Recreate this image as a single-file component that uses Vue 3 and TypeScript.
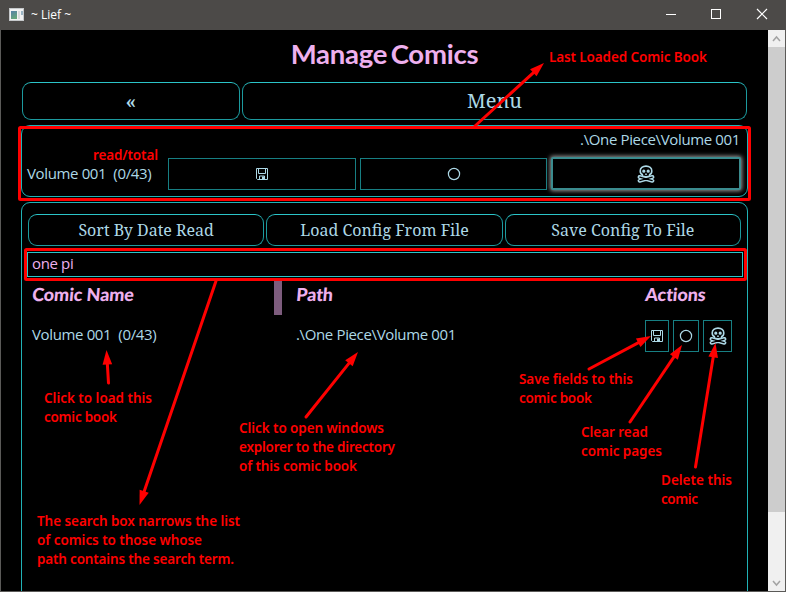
<script setup lang="ts">
import { ref } from 'vue'

interface Arrow { x1: number; y1: number; x2: number; y2: number }
interface Note { x: number; y: number; w: number; text: string }

const search = ref('one pi')

const arrows: Arrow[] = [
  { x1: 475, y1: 126, x2: 544, y2: 63 },
  { x1: 108.5, y1: 383, x2: 106.5, y2: 350 },
  { x1: 306, y1: 417, x2: 358, y2: 352 },
  { x1: 216, y1: 281, x2: 139.5, y2: 505 },
  { x1: 589, y1: 369, x2: 651, y2: 336 },
  { x1: 630, y1: 422, x2: 682, y2: 345 },
  { x1: 695.5, y1: 467, x2: 715.5, y2: 343 },
]

const notes: Note[] = [
  { x: 549, y: 62, w: 158, text: 'Last Loaded Comic Book' },
  { x: 93, y: 160, w: 65, text: 'read/total' },
  { x: 44, y: 403, w: 108, text: 'Click to load this' },
  { x: 44, y: 422, w: 73, text: 'comic book' },
  { x: 239, y: 433, w: 145, text: 'Click to open windows' },
  { x: 239, y: 452, w: 156, text: 'explorer to the directory' },
  { x: 239, y: 471, w: 118, text: 'of this comic book' },
  { x: 519, y: 384, w: 114, text: 'Save fields to this' },
  { x: 519, y: 403, w: 73, text: 'comic book' },
  { x: 581, y: 437, w: 67, text: 'Clear read' },
  { x: 581, y: 456, w: 81, text: 'comic pages' },
  { x: 661, y: 485, w: 71, text: 'Delete this' },
  { x: 661, y: 504, w: 37, text: 'comic' },
  { x: 37, y: 526, w: 203, text: 'The search box narrows the list' },
  { x: 37, y: 545, w: 165, text: 'of comics to those whose' },
  { x: 37, y: 564, w: 197, text: 'path contains the search term.' },
]

function head(a: Arrow): string {
  const d = Math.hypot(a.x2 - a.x1, a.y2 - a.y1)
  const ux = (a.x2 - a.x1) / d
  const uy = (a.y2 - a.y1) / d
  const bx = a.x2 - ux * 14.5
  const by = a.y2 - uy * 14.5
  return `${a.x2},${a.y2} ${bx - uy * 4.8},${by + ux * 4.8} ${bx + uy * 4.8},${by - ux * 4.8}`
}

function shaft(a: Arrow) {
  const d = Math.hypot(a.x2 - a.x1, a.y2 - a.y1)
  const k = (d - 12) / d
  return { x1: a.x1, y1: a.y1, x2: a.x1 + (a.x2 - a.x1) * k, y2: a.y1 + (a.y2 - a.y1) * k }
}
</script>

<template>
  <div class="window">
    <svg width="0" height="0" class="defs">
      <symbol id="disk" viewBox="0 0 12 12">
        <path d="M.5.5h11v11h-10l-1-1zM2.5.5v5h7v-5M3.500 11.500v-3.500h5v3.500" fill="none" stroke="currentColor" />
        <path d="M6 8.500h2.500v3H6z" fill="currentColor" />
      </symbol>
      <symbol id="circle" viewBox="0 0 14 14">
        <circle cx="7" cy="7" r="5.600" fill="none" stroke="currentColor" stroke-width="1.200" />
      </symbol>
      <symbol id="skull" viewBox="0 0 18 18">
        <path d="M5.300 10.800V9.600C3.700 9 3.200 7.500 3.200 6c0-3 2.500-4.900 5.800-4.900S14.800 3 14.800 6c0 1.500-.5 3-2.100 3.600v1.200c-1.200 1.300-6.200 1.300-7.400 0z" fill="none" stroke="currentColor" stroke-width="1.600" />
        <path d="M5.200 6.200a1.600 1.600 0 1 0 3.200 0a1.600 1.600 0 1 0-3.200 0M9.600 6.200a1.600 1.600 0 1 0 3.200 0a1.600 1.600 0 1 0-3.200 0M8.200 8.500h1.600v1.500H8.200z" fill="currentColor" />
        <path d="M2.600 12l12.800 3.800M15.400 12L2.600 15.800" fill="none" stroke="currentColor" stroke-width="4" stroke-linecap="round" />
        <path d="M2.800 12.100l12.400 3.600M15.200 12.100L2.800 15.700" fill="none" stroke="#000" stroke-width="1.200" stroke-linecap="round" />
      </symbol>
    </svg>

    <header class="titlebar">
      <svg class="app-icon" width="16" height="14" viewBox="0 0 16 14">
        <defs>
          <linearGradient id="pane" x1="0" y1="0" x2=".4" y2="1">
            <stop offset="0" stop-color="#5580a8" />
            <stop offset="1" stop-color="#65a57b" />
          </linearGradient>
        </defs>
        <rect x=".5" y=".5" width="14" height="12" fill="#f1f2f2" stroke="#c5c8ca" />
        <rect x="2" y="3" width="6" height="8" fill="url(#pane)" />
        <rect x="9" y="3" width="2" height="8" fill="#d8dadc" />
        <rect x="12" y="3" width="2" height="4" fill="#9bb5c4" />
      </svg>
      <span class="app-name">~ Lief ~</span>
      <div class="controls">
        <svg width="46" height="30"><path d="M18 14.500h10" stroke="#fff" /></svg>
        <svg width="46" height="30"><rect x="17.500" y="9.500" width="9" height="9" stroke="#fff" fill="none" /></svg>
        <svg width="46" height="30"><path d="M17 9l10 10M27 9l-10 10" stroke="#fff" stroke-width="1.200" /></svg>
      </div>
    </header>

    <div class="body">
      <main class="page">
        <h1>Manage Comics</h1>
        <nav class="nav">
          <button class="pill back">«</button>
          <button class="pill menu">Menu</button>
        </nav>

        <section class="panel current">
          <div class="current-path">.\One Piece\Volume 001</div>
          <div class="current-row">
            <span class="current-name">Volume 001&nbsp; (0/43)</span>
            <button class="box"><svg width="12" height="12"><use href="#disk" /></svg></button>
            <button class="box"><svg width="14" height="14"><use href="#circle" /></svg></button>
            <button class="box focused"><svg width="18" height="18"><use href="#skull" /></svg></button>
          </div>
        </section>

        <section class="panel library">
          <div class="tools">
            <button class="pill tool">Sort By Date Read</button>
            <button class="pill tool">Load Config From File</button>
            <button class="pill tool">Save Config To File</button>
          </div>
          <input v-model="search" class="search" type="text" spellcheck="false" />
          <div class="grid head">
            <div class="h">Comic Name</div>
            <div class="grip"></div>
            <div class="h">Path</div>
            <div class="h">Actions</div>
          </div>
          <div class="grid row">
            <div class="cell">Volume 001&nbsp; (0/43)</div>
            <div></div>
            <div class="cell">.\One Piece\Volume 001</div>
            <div class="actions">
              <button class="box save"><svg width="12" height="12"><use href="#disk" /></svg></button>
              <button class="box clear"><svg width="14" height="14"><use href="#circle" /></svg></button>
              <button class="box remove"><svg width="18" height="18"><use href="#skull" /></svg></button>
            </div>
          </div>
        </section>
      </main>

      <aside class="scrollbar">
        <svg width="17" height="17"><path d="M5 11l3.500-4 3.500 4" fill="none" stroke="#a3a3a3" stroke-width="1.500" /></svg>
        <div class="thumb"></div>
        <svg class="down" width="17" height="17"><path d="M5 7l3.500 4L12 7" fill="none" stroke="#a3a3a3" stroke-width="1.500" /></svg>
      </aside>
    </div>

    <svg class="overlay" width="786" height="592" viewBox="0 0 786 592">
      <rect x="19.500" y="127.500" width="730" height="72" rx="1" class="frame" />
      <rect x="25.500" y="249.500" width="720" height="30" rx="1" class="frame" />
      <g v-for="(a, i) in arrows" :key="i">
        <line v-bind="shaft(a)" class="shaft" />
        <polygon :points="head(a)" fill="#f00" />
      </g>
      <text v-for="n in notes" :key="n.text + n.x" :x="n.x" :y="n.y" :textLength="n.w" class="note">{{ n.text }}</text>
    </svg>
  </div>
</template>

<style>
body {
  margin: 0;
  background: #000;
  overflow: hidden;
}
</style>

<style scoped>
* {
  box-sizing: border-box;
}
.window {
  position: relative;
  width: 786px;
  height: 592px;
  display: flex;
  flex-direction: column;
  background: #000;
  color: #add8e6;
  overflow: hidden;
  font: 15px/20px "Open Sans", "Noto Sans", sans-serif;
  letter-spacing: -0.36px;
}
.defs {
  position: absolute;
}
.titlebar {
  height: 30px;
  flex: none;
  display: flex;
  align-items: center;
  background: #4c4a48;
  color: #fff;
  padding-left: 9px;
}
.app-name {
  font-size: 12px;
  margin-left: 6px;
  letter-spacing: 0;
}
.controls {
  display: flex;
  margin-left: auto;
}
.body {
  flex: 1;
  min-height: 0;
  display: flex;
  border: 1px solid #5b5a58;
  border-top: 0;
}
.page {
  flex: 1;
  min-width: 0;
  padding: 0 20px;
  overflow: hidden;
}
h1 {
  margin: 0;
  height: 52px;
  line-height: 48px;
  text-align: center;
  font-family: Lato, sans-serif;
  font-weight: 700;
  font-size: 27.5px;
  letter-spacing: -0.25px;
  word-spacing: -3px;
  color: #eeb0ee;
}
button {
  font: inherit;
  color: inherit;
  background: #000;
  padding: 0;
  margin: 0;
  display: flex;
  align-items: center;
  justify-content: center;
}
.pill {
  border: 1px solid #1c9a9e;
  border-top-color: #2bc4c8;
  border-radius: 9px;
  font-family: "Noto Serif", "Droid Serif", "DejaVu Serif Condensed", "DejaVu Serif", serif;
  letter-spacing: 0;
}
.nav {
  display: flex;
  gap: 2px;
  padding: 0 1px;
}
.nav .pill {
  height: 38px;
  font-size: 20px;
}
.nav .back {
  width: 218px;
  font-weight: 600;
}
.menu {
  flex: 1;
}
.panel {
  border: 1px solid #20b2b6;
  border-radius: 9px;
}
.current {
  margin-top: 5px;
  height: 72px;
  padding: 3px 6px 0 5px;
}
.current-path {
  text-align: right;
  padding-right: 1px;
}
.current-row {
  display: flex;
  align-items: center;
  margin-top: 8px;
  gap: 4px;
}
.current-name {
  width: 137px;
  padding-bottom: 2px;
}
.box {
  border: 1px solid #177f83;
  height: 32px;
}
.current-row .box {
  flex: 1;
}
.current-row .focused {
  height: 33px;
  border: 2px solid #3b8b8e;
  border-radius: 2px;
  box-shadow: 0 0 4px 1px #9a9a9a;
}
.library {
  margin-top: 5px;
  height: 420px;
  padding: 11px 6px 0;
}
.tools {
  display: flex;
  gap: 2px;
}
.tool {
  flex: 1;
  height: 32px;
  font-size: 16px;
  padding-bottom: 1px;
}
.search {
  display: block;
  width: 716px;
  height: 25px;
  margin: 6px 0 0 -1px;
  padding: 0 4px 3px;
  border: 1px solid #2bc4c8;
  background: #000;
  color: #eeb0ee;
  font: inherit;
  letter-spacing: -0.36px;
  outline: none;
}
.grid {
  display: grid;
  grid-template-columns: 242px 8px 363px 1fr;
  padding-left: 4px;
}
.grid > :nth-child(3) {
  padding-left: 14px;
}
.head {
  height: 34px;
  margin-top: 4px;
}
.h {
  font: 900 18px/27px Lato, sans-serif;
  letter-spacing: -0.1px;
  color: #eeb0ee;
  transform: skewX(-5deg);
}
.grip {
  background: #7d5c7d;
  height: 34px;
}
.row {
  align-items: center;
  padding-top: 5px;
}
.cell {
  padding-bottom: 4px;
}
.actions {
  display: flex;
  gap: 4px;
}
.save {
  width: 24px;
}
.clear {
  width: 26px;
}
.remove {
  width: 29px;
}
.scrollbar {
  width: 17px;
  background: #f0f0f0;
  display: flex;
  flex-direction: column;
}
.thumb {
  height: 465px;
  background: #cdcdcd;
}
.down {
  margin-top: auto;
}
.scrollbar svg {
  flex: none;
}
.overlay {
  position: absolute;
  inset: 0;
  pointer-events: none;
}
.frame {
  fill: none;
  stroke: #f00;
  stroke-width: 3;
}
.shaft {
  stroke: #f00;
  stroke-width: 3;
  stroke-linecap: round;
}
.note {
  fill: #f00;
  font: 600 13.5px "Noto Sans", sans-serif;
  letter-spacing: 0;
}
</style>
